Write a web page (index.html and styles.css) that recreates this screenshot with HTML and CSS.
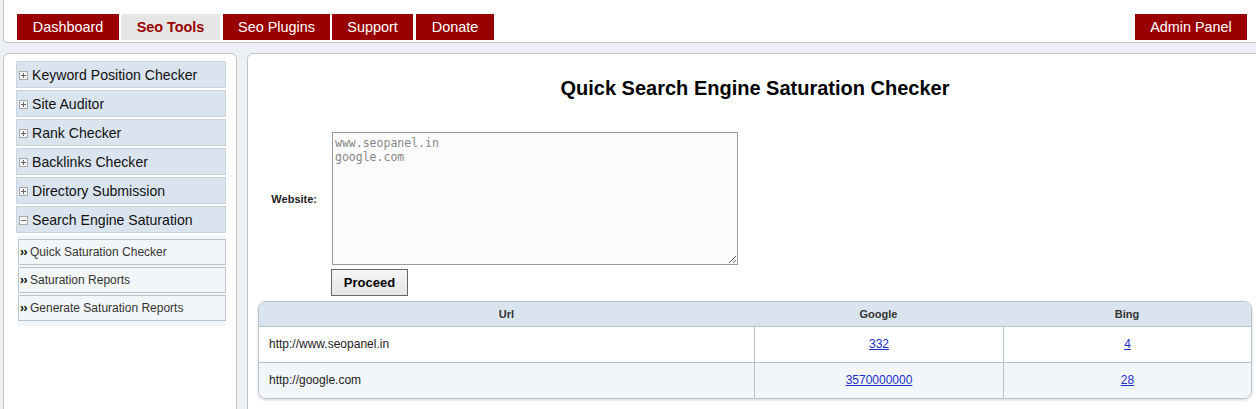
FILE: index.html
```html
<!DOCTYPE html>
<html>
<head>
<meta charset="utf-8">
<title>Seo Panel</title>
<link rel="stylesheet" href="styles.css">
</head>
<body>
<div class="header">
  <div class="tabs">
    <a class="tab t1">Dashboard</a>
    <a class="tab t2 active">Seo Tools</a>
    <a class="tab t3">Seo Plugins</a>
    <a class="tab t4">Support</a>
    <a class="tab t5">Donate</a>
  </div>
  <a class="tab admin">Admin Panel</a>
</div>
<div class="main">
  <div class="sidebar">
    <div class="menu-item"><span class="pm plus"></span>Keyword Position Checker</div>
    <div class="menu-item"><span class="pm plus"></span>Site Auditor</div>
    <div class="menu-item"><span class="pm plus"></span>Rank Checker</div>
    <div class="menu-item"><span class="pm plus"></span>Backlinks Checker</div>
    <div class="menu-item"><span class="pm plus"></span>Directory Submission</div>
    <div class="menu-item"><span class="pm minus"></span>Search Engine Saturation</div>
    <div class="submenu">
      <div class="sub-item"><b>››</b>Quick Saturation Checker</div>
      <div class="sub-item"><b>››</b>Saturation Reports</div>
      <div class="sub-item"><b>››</b>Generate Saturation Reports</div>
    </div>
  </div>
  <div class="content">
    <h1 class="title">Quick Search Engine Saturation Checker</h1>
    <div class="form-row">
      <label class="label">Website:</label>
      <textarea class="websites" spellcheck="false">www.seopanel.in
google.com</textarea>
    </div>
    <div class="btn-row"><button class="btn">Proceed</button></div>
    <div class="results">
      <div class="row head">
        <div class="cell c1">Url</div>
        <div class="cell c2">Google</div>
        <div class="cell c3">Bing</div>
      </div>
      <div class="row">
        <div class="cell c1 url">http://www.seopanel.in</div>
        <div class="cell c2"><a href="#">332</a></div>
        <div class="cell c3"><a href="#">4</a></div>
      </div>
      <div class="row alt">
        <div class="cell c1 url">http://google.com</div>
        <div class="cell c2"><a href="#">3570000000</a></div>
        <div class="cell c3"><a href="#">28</a></div>
      </div>
    </div>
  </div>
</div>
</body>
</html>
```
FILE: styles.css
```css
html, body {
  margin: 0;
  padding: 0;
}
body {
  background: #eceff3;
  font-family: "Liberation Sans", Arial, sans-serif;
  overflow: hidden;
  width: 1256px;
  height: 409px;
}
.header {
  box-sizing: border-box;
  height: 43px;
  margin-left: 3px;
  margin-right: -20px;
  background: #fff;
  border-left: 1px solid #c4c4c4;
  border-bottom: 1px solid #c4c4c4;
  border-bottom-left-radius: 4px;
  display: flex;
  justify-content: space-between;
  align-items: flex-end;
  padding: 0 29px 2px 13px;
}
.tabs {
  display: flex;
  gap: 2px;
}
.tab {
  display: block;
  box-sizing: border-box;
  height: 26px;
  line-height: 26px;
  text-align: center;
  white-space: nowrap;
  background: #990000;
  color: #fff;
  font-size: 14.4px;
  text-decoration: none;
}
.t1 { width: 102px; }
.t2 { width: 99px; margin-right: 1px; }
.t3 { width: 107px; }
.t4 { width: 81px; margin-right: 1px; }
.t5 { width: 78px; }
.tab.active {
  background: #e6e6e6;
  color: #990000;
  font-weight: bold;
}
.admin {
  width: 112px;
}
.main {
  display: flex;
  align-items: flex-start;
  margin-top: 10px;
  gap: 10px;
}
.sidebar {
  box-sizing: border-box;
  flex: none;
  margin-left: 3px;
  width: 234px;
  height: 380px;
  background: #fff;
  border: 1px solid #c4c4c4;
  border-radius: 6px 6px 0 0;
  padding: 7px 0 0 12px;
  display: flex;
  flex-direction: column;
  gap: 2px;
}
.menu-item {
  box-sizing: border-box;
  width: 210px;
  height: 27px;
  background: #dae4ee;
  border: 1px solid #c9d3dd;
  display: flex;
  align-items: center;
  font-size: 14.1px;
  color: #111;
  padding-left: 2px;
}
.pm {
  position: relative;
  box-sizing: border-box;
  width: 9px;
  height: 9px;
  border: 1px solid #a8a8a8;
  background: #f4f4f4;
  margin-right: 4px;
  margin-top: 1px;
}
.pm::before, .plus::after {
  content: "";
  position: absolute;
  background: #666;
}
.pm::before {
  left: 1px;
  top: 3px;
  width: 5px;
  height: 1px;
}
.plus::after {
  left: 3px;
  top: 1px;
  width: 1px;
  height: 5px;
}
.submenu {
  margin-left: 2px;
  width: 208px;
  background: #f3f6f9;
  padding: 4px 0 5px;
  display: flex;
  flex-direction: column;
  gap: 2px;
}
.sub-item {
  box-sizing: border-box;
  height: 26px;
  border: 1px solid #b9c5cf;
  background: #f3f6f9;
  font-size: 12px;
  color: #333;
  line-height: 24px;
  padding-left: 1px;
}
.sub-item b {
  color: #000;
  font-size: 12px;
  letter-spacing: -0.5px;
  margin-right: 3px;
}
.content {
  box-sizing: border-box;
  flex: none;
  width: 1016px;
  height: 380px;
  background: #fff;
  border: 1px solid #c4c4c4;
  border-radius: 6px 6px 0 0;
  padding: 23px 10px 0;
}
.title {
  margin: 0;
  font-size: 20px;
  line-height: 22px;
  text-align: center;
  color: #000;
}
.form-row {
  display: flex;
  align-items: center;
  margin-top: 33px;
}
.label {
  width: 59px;
  text-align: right;
  font-size: 11px;
  font-weight: bold;
  color: #222;
  margin-right: 15px;
}
.websites {
  box-sizing: border-box;
  width: 406px;
  height: 133px;
  margin: 0;
  border: 1px solid #9a9a9a;
  background: #fbfbfb;
  font-family: "DejaVu Sans Mono", monospace;
  font-size: 11.5px;
  line-height: 14px;
  color: #888;
  padding: 3px 2px;
}
.btn-row {
  padding-left: 73px;
  margin-top: 4px;
}
.btn {
  box-sizing: border-box;
  width: 77px;
  height: 27px;
  margin: 0;
  border: 1px solid #666;
  background: linear-gradient(#f6f6f6, #e4e4e4);
  font-family: "Liberation Sans", Arial, sans-serif;
  font-size: 13px;
  font-weight: bold;
  color: #000;
  padding: 0;
}
.results {
  margin-top: 5px;
  border: 1px solid #b6c2cc;
  border-radius: 8px;
  overflow: hidden;
  box-shadow: 0 1px 3px rgba(0, 0, 0, 0.18);
}
.row {
  display: flex;
  height: 35px;
  border-top: 1px solid #b6c2cc;
  background: #fff;
}
.row.alt {
  background: #f3f6f9;
}
.row.head {
  height: 24px;
  border-top: none;
  background: #dae4ee;
}
.cell {
  box-sizing: border-box;
  display: flex;
  align-items: center;
  justify-content: center;
  font-size: 12px;
  color: #222;
  padding-bottom: 2px;
}
.head .cell {
  font-size: 11px;
  font-weight: bold;
  color: #333;
  padding-bottom: 0;
}
.c1 { width: 495px; }
.c2 { width: 249px; border-left: 1px solid #b6c2cc; }
.c3 { flex: 1; border-left: 1px solid #b6c2cc; }
.head .c2, .head .c3 { border-left: none; }
.url {
  justify-content: flex-start;
  padding-left: 10px;
}
.cell a {
  color: #1a2fcc;
  text-decoration: underline;
}
```
